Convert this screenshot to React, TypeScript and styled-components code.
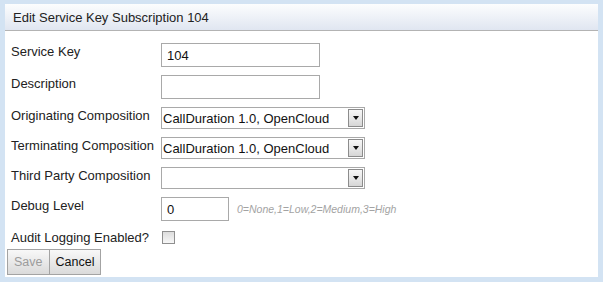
import React from "react";
import styled, { createGlobalStyle } from "styled-components";

const GlobalStyle = createGlobalStyle`
  html, body {
    margin: 0;
    padding: 0;
    background: #d3e3f3;
  }
  body {
    font-family: "Liberation Sans", Arial, sans-serif;
    color: #222;
  }
`;

const Panel = styled.div`
  margin: 4px 5px 5px;
  background: #fff;
`;

const Header = styled.div`
  height: 26px;
  display: flex;
  align-items: center;
  padding-left: 8px;
  font-size: 13px;
  color: #222;
  background: linear-gradient(to bottom, #fcfdfe 0%, #e0e6f1 100%);
  border-bottom: 1px solid #b3b3b3;
`;

const Body = styled.div`
  padding: 12px 2px 2px;
`;

const Form = styled.div`
  display: grid;
  grid-template-columns: 154px 1fr;
  row-gap: 8px;
  align-items: start;
`;

const Label = styled.label`
  padding: 1px 0 0 4px;
  font-size: 13px;
  line-height: 15px;
  color: #222;
`;

const Field = styled.div`
  display: flex;
  align-items: center;
`;

const TextInput = styled.input<{ $width: number }>`
  box-sizing: border-box;
  width: ${(p) => p.$width}px;
  height: 24px;
  margin: 0;
  padding: 0 5px;
  border: 1px solid #a9a9a9;
  font-family: "Liberation Sans", Arial, sans-serif;
  font-size: 13px;
  color: #111;
  outline: none;
`;

const SelectWrap = styled.div`
  position: relative;
  width: 204px;
  height: 22px;
`;

const Select = styled.select`
  appearance: none;
  box-sizing: border-box;
  width: 100%;
  height: 100%;
  margin: 0;
  padding: 0 18px 0 1px;
  border: 1px solid #a9a9a9;
  border-radius: 0;
  background: #fff;
  font-family: "Liberation Sans", Arial, sans-serif;
  font-size: 13px;
  color: #111;
  outline: none;
`;

const Arrow = styled.span`
  position: absolute;
  top: 2px;
  right: 2px;
  bottom: 2px;
  width: 15px;
  box-sizing: border-box;
  border: 1px solid #8c8c8c;
  background: linear-gradient(to bottom, #f7f7f7 0%, #e8e8e8 50%, #d6d6d6 100%);
  display: flex;
  align-items: center;
  justify-content: center;
  pointer-events: none;

  &::after {
    content: "";
    width: 0;
    height: 0;
    border-left: 3.5px solid transparent;
    border-right: 3.5px solid transparent;
    border-top: 4px solid #111;
  }
`;

const Hint = styled.span`
  margin-left: 8px;
  font-size: 10.5px;
  font-style: italic;
  color: #a3a3a3;
`;

const Checkbox = styled.input`
  appearance: none;
  box-sizing: border-box;
  width: 13px;
  height: 13px;
  margin: 2px 0 2px 1px;
  border: 1px solid #8f8f8f;
  background: linear-gradient(to bottom, #dcdcdc 0%, #f7f7f7 100%);
`;

const Buttons = styled.div`
  display: flex;
  margin-top: 3px;
`;

const Button = styled.button<{ $disabled?: boolean }>`
  height: 26px;
  margin: 0;
  padding: 0 6px;
  border: 1px solid #a3a3a3;
  border-radius: 0;
  background: linear-gradient(to bottom, #f8f8f8 0%, #e6e6e6 60%, #dadada 100%);
  font-family: "Liberation Sans", Arial, sans-serif;
  font-size: 12.5px;
  color: ${(p) => (p.$disabled ? "#9c9c9c" : "#111")};
  cursor: default;

  & + & {
    margin-left: -1px;
  }
`;

const SelectField: React.FC<{ value: string }> = ({ value }) => (
  <SelectWrap>
    <Select defaultValue={value}>
      <option value="">{""}</option>
      <option value="CallDuration 1.0, OpenCloud">CallDuration 1.0, OpenCloud</option>
    </Select>
    <Arrow />
  </SelectWrap>
);

export default function App() {
  return (
    <>
      <GlobalStyle />
      <Panel>
        <Header>Edit Service Key Subscription 104</Header>
        <Body>
          <Form>
            <Label>Service Key</Label>
            <Field>
              <TextInput $width={159} defaultValue="104" />
            </Field>

            <Label>Description</Label>
            <Field>
              <TextInput $width={159} defaultValue="" />
            </Field>

            <Label>Originating Composition</Label>
            <Field>
              <SelectField value="CallDuration 1.0, OpenCloud" />
            </Field>

            <Label>Terminating Composition</Label>
            <Field>
              <SelectField value="CallDuration 1.0, OpenCloud" />
            </Field>

            <Label>Third Party Composition</Label>
            <Field>
              <SelectField value="" />
            </Field>

            <Label>Debug Level</Label>
            <Field>
              <TextInput $width={68} defaultValue="0" />
              <Hint>0=None,1=Low,2=Medium,3=High</Hint>
            </Field>

            <Label>Audit Logging Enabled?</Label>
            <Field>
              <Checkbox type="checkbox" />
            </Field>
          </Form>
          <Buttons>
            <Button $disabled>Save</Button>
            <Button>Cancel</Button>
          </Buttons>
        </Body>
      </Panel>
    </>
  );
}
